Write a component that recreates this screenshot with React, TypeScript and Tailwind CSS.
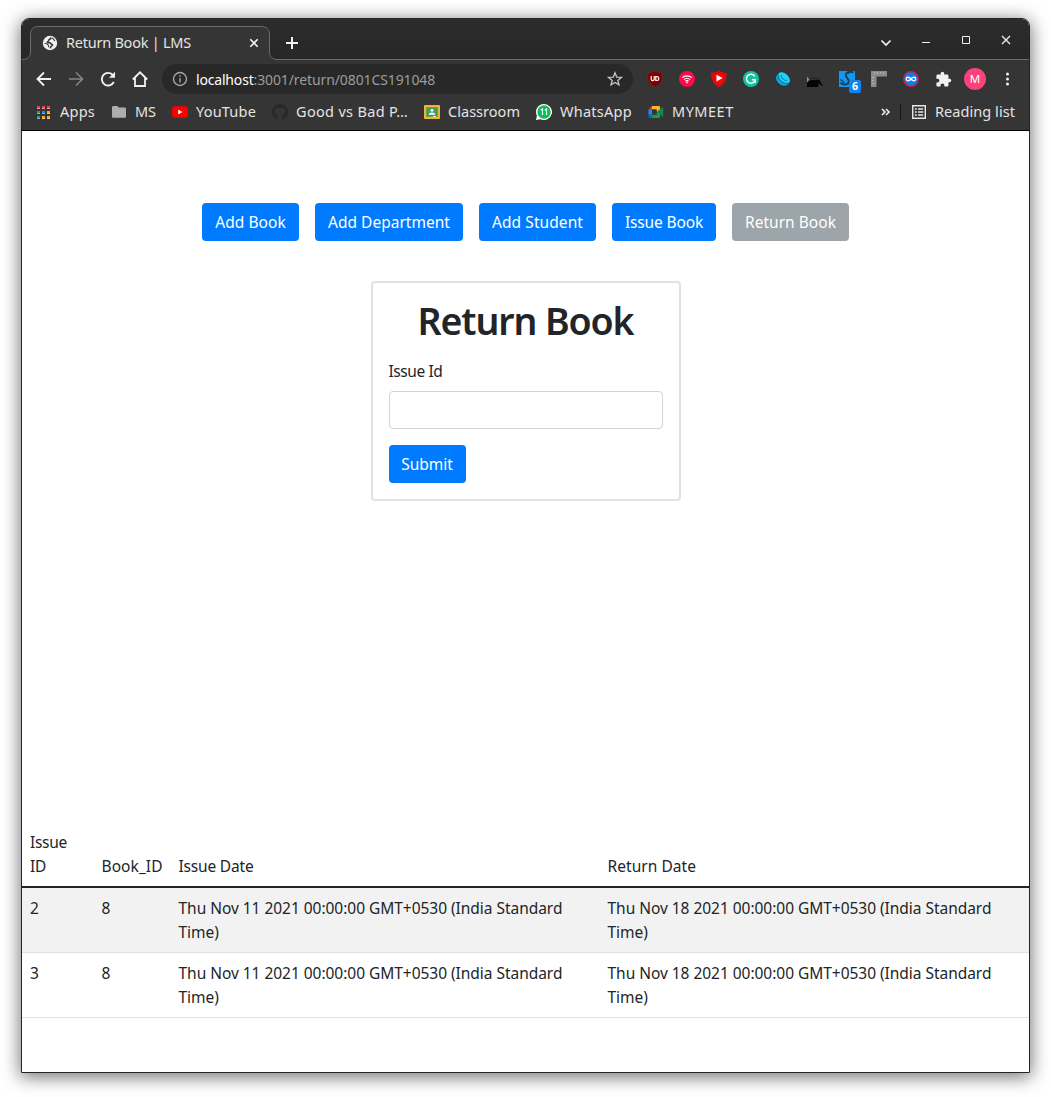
import type { ReactNode } from "react";

function Globe() {
  return (
    <svg width="16" height="16" viewBox="0 0 16 16">
      <circle cx="8" cy="8" r="7.200" fill="#f1f1f1" />
      <path d="M8.300 2.400C9.200 3.200 9 3.900 8 4.100 6.800 4.300 6.700 4.900 6.700 5.700 6.700 6.400 5.400 6.300 5.300 7.100 5.200 7.900 6.600 7.800 7.600 7.800 9 7.800 8.800 9 9.800 9.300 11 9.600 10.400 10.700 9.600 11 8.700 11.300 8.900 12.300 8 13.200" fill="none" stroke="#353535" strokeWidth="1.500" />
      <path d="M2.500 8.300c1.700.2 3.200.6 3.700 1.700.4.900.1 1.600.9 2.100M10 3c1.700.7 2.300 1.800 2.700 3" fill="none" stroke="#353535" strokeWidth="1.100" />
    </svg>
  );
}

function Stroke({ d, size = 16, color = "#f1f1f1", width = 1.8 }: { d: string; size?: number; color?: string; width?: number }) {
  return (
    <svg width={size} height={size} viewBox="0 0 16 16" fill="none" stroke={color} strokeWidth={width}>
      <path d={d} />
    </svg>
  );
}

function Cell({ children }: { children: ReactNode }) {
  return <div className="flex w-8 shrink-0 items-center justify-center">{children}</div>;
}

function TabStrip() {
  return (
    <div className="flex h-[41px] shrink-0 bg-linear-to-b from-[#2c2c2c] to-[#272727]">
      <div className="flex w-[256px] shrink-0">
        <svg width="256" height="41" viewBox="0 0 256 41" className="absolute">
          <path d="M0 41V40.500C5 40.500 8.500 38 8.500 33V15.500C8.500 10.500 11.500 7.500 16.500 7.500H239.500C244.500 7.500 247.500 10.500 247.500 15.500V33C247.500 38 250.500 40.500 256 40.500V41Z" fill="#353535" />
          <path d="M0 40.500C5 40.500 8.500 38 8.500 33V15.500C8.500 10.500 11.500 7.500 16.500 7.500H239.500C244.500 7.500 247.500 10.500 247.500 15.500V33C247.500 38 250.500 40.500 256 40.500" fill="none" stroke="#6d6d6d" />
        </svg>
        <div className="relative flex w-full items-center pt-[7px] pl-5">
          <Globe />
          <span className="ml-2 w-[180px] shrink-0 text-[14.5px] tracking-[-0.24px] text-[#e4e4e4]">Return Book | LMS</span>
          <Stroke d="M4.300 4.300l7.400 7.400M11.700 4.300l-7.400 7.400" width={1.6} />
        </div>
      </div>
      <div className="flex flex-1 items-center border-b border-[#6d6d6d] pt-[7px]">
        <div className="ml-[6px] flex">
          <Stroke d="M8 2v12M2 8h12" width={2} />
        </div>
        <div className="mb-[5px] ml-auto flex items-center">
          <div className="mt-[5px] -mr-px flex w-10 justify-center">
            <Stroke d="M3.500 5.500L8 10l4.500-4.500" width={1.7} />
          </div>
          <div className="ml-px flex w-10 justify-center">
            <Stroke d="M4 10.500h8" width={1} />
          </div>
          <div className="flex w-10 justify-center">
            <Stroke d="M4.500 4.500h7v7h-7z" width={1} />
          </div>
          <div className="mr-[3px] flex w-10 justify-center">
            <Stroke d="M4 4l8 8M12 4l-8 8" width={1.3} />
          </div>
        </div>
      </div>
    </div>
  );
}

function Extensions() {
  return (
    <div className="flex">
      <Cell>
        <svg width="16" height="16" viewBox="0 0 16 16">
          <path d="M8 0c2.500 1.300 4.500 1.700 7 1.800v5.500c0 4-2.500 6.500-7 8.700-4.500-2.200-7-4.700-7-8.700V1.800C3.500 1.700 5.500 1.300 8 0z" fill="#800000" stroke="#a33" strokeWidth=".3" />
          <path d="M4.200 5v3.200c0 1.900 3 1.900 3 0V5M8.800 5v4.500h1.200c2.500 0 2.500-3.800 0-3.800H8.800" fill="none" stroke="#fff" strokeWidth="1.200" />
        </svg>
      </Cell>
      <Cell>
        <svg width="16" height="16" viewBox="0 0 16 16">
          <circle cx="8" cy="8" r="8" fill="#fb0a50" />
          <g fill="none" stroke="#fff" strokeWidth="1.100">
            <path d="M3.200 6.700c2.700-2.500 6.900-2.500 9.600 0M4.900 8.600c1.800-1.600 4.400-1.600 6.200 0M6.400 10.300c1-.8 2.200-.8 3.200 0" />
          </g>
          <circle cx="8" cy="11.600" r=".8" fill="#fff" />
        </svg>
      </Cell>
      <Cell>
        <svg width="16" height="16" viewBox="0 0 16 16">
          <path d="M8 0c2.500 1.300 5 1.800 7.700 1.800C15.900 8.500 13.500 13.500 8 16 2.500 13.500.1 8.500.3 1.800 3 1.800 5.500 1.300 8 0z" fill="#f30c0c" />
          <path d="M8 1.800c2 .9 4 1.300 6 1.400C14 8.300 12 12.300 8 14.300 4 12.300 2 8.300 2 3.200c2-.1 4-.5 6-1.400z" fill="none" stroke="#d80000" />
          <path d="M5.500 3.800v6.600L11.500 7.100z" fill="#fff" />
        </svg>
      </Cell>
      <Cell>
        <svg width="16" height="16" viewBox="0 0 16 16">
          <circle cx="8" cy="8" r="8" fill="#11c39a" />
          <path d="M11.800 5.400A4.500 4.500 0 1 0 12.300 8.800H9M12.300 8.500v3.200" fill="none" stroke="#fff" strokeWidth="1.400" />
        </svg>
      </Cell>
      <Cell>
        <svg width="16" height="16" viewBox="0 0 16 16">
          <g transform="rotate(42 8 8)">
            <ellipse cx="8" cy="8.700" rx="7.200" ry="5.500" fill="#0aa5e0" />
            <ellipse cx="8" cy="6.500" rx="7" ry="4.300" fill="#1cd3f5" />
            <path d="M1.500 7.800c2.500 4 10.500 4 13 0M4 6.300c1.800 2.300 6.200 2.300 8 0" fill="none" stroke="#08618e" strokeWidth=".8" />
          </g>
        </svg>
      </Cell>
      <Cell>
        <svg width="16" height="16" viewBox="0 0 16 16">
          <path d="M2 8l3-2h7l2 3z" fill="#2a2a2a" />
          <path d="M0 11.500L4 9h8.500L16 15l-2.500-1-1.500-2-1 4H0z" fill="#050505" />
          <path d="M0 5.500l2.300 3L0 11.500z" fill="#f47b20" />
        </svg>
      </Cell>
      <Cell>
        <div className="relative h-4 w-4">
          <svg width="16" height="16" viewBox="0 0 16 16">
            <path d="M0 0h16v16H0z" fill="#0a9bfa" />
            <path d="M14.500 1.500C10.500-.2 6.300 1.500 6.800 4.500c.4 2.300 3.500 3.500 3 6.300-.5 3-5 3.800-8.500.9" fill="none" stroke="#263b4a" strokeWidth="2" />
            <path d="M1.500 8.500L5.500 12M11.500 0L8.500 3" fill="none" stroke="#263b4a" strokeWidth="1.200" />
          </svg>
          <span className="absolute top-[9px] left-[10px] flex h-[13px] w-[12px] items-center justify-center rounded-[2px] bg-[#1083ec] text-[10.500px] leading-none font-bold text-white">6</span>
        </div>
      </Cell>
      <Cell>
        <svg width="16" height="16" viewBox="0 0 16 16">
          <path d="M0 0h16v5.500H5.500V16H0z" fill="#8d8d8d" />
          <path d="M3.500 1v1.500M6.500 1v2M9.500 1v1.500M12.500 1v2M1 6.500h2M1 9.500h1.500M1 12.500h2" stroke="#b5b5b5" strokeWidth="1" />
        </svg>
      </Cell>
      <Cell>
        <svg width="16" height="16" viewBox="0 0 16 16">
          <circle cx="8" cy="8" r="7.400" fill="#0b7bef" stroke="#e8132b" strokeWidth="1.200" />
          <path d="M8 8C6.300 5.600 3.200 5.700 3.200 8S6.300 10.400 8 8s4.800-2.300 4.800 0S9.700 10.400 8 8z" fill="none" stroke="#fff" strokeWidth="1.300" />
        </svg>
      </Cell>
      <Cell>
        <svg width="17" height="17" viewBox="0 0 24 24" fill="#f1f1f1">
          <path d="M20.500 11H19V7c0-1.100-.9-2-2-2h-4V3.500a2.500 2.500 0 0 0-5 0V5H4c-1.100 0-2 .9-2 2v3.800h1.500a2.700 2.700 0 0 1 0 5.400H2V20c0 1.100.9 2 2 2h3.800v-1.500a2.700 2.700 0 0 1 5.400 0V22H17c1.100 0 2-.9 2-2v-4h1.500a2.500 2.500 0 0 0 0-5z" />
        </svg>
      </Cell>
      <Cell>
        <div className="flex h-[22px] w-[22px] items-center justify-center rounded-full bg-[#fc427b] text-[11.500px] text-white">M</div>
      </Cell>
      <Cell>
        <svg width="16" height="16" viewBox="0 0 16 16" fill="#f1f1f1">
          <circle cx="8.500" cy="3" r="1.500" />
          <circle cx="8.500" cy="8" r="1.500" />
          <circle cx="8.500" cy="13" r="1.500" />
        </svg>
      </Cell>
    </div>
  );
}

function AddressRow() {
  return (
    <div className="flex h-10 shrink-0 items-center bg-[#353535] pb-[2px] pl-[6px]">
      <Cell>
        <Stroke d="M15 8H2M8 1.500L1.500 8 8 14.500" />
      </Cell>
      <Cell>
        <Stroke d="M1 8h13M8 1.500L14.500 8 8 14.500" color="#858585" width={1.600} />
      </Cell>
      <Cell>
        <svg width="16" height="16" viewBox="0 0 16 16">
          <path d="M13.800 11A6.300 6.300 0 1 1 13 4.200" fill="none" stroke="#f1f1f1" strokeWidth="1.900" />
          <path d="M15 .8v6H9z" fill="#f1f1f1" />
        </svg>
      </Cell>
      <Cell>
        <Stroke d="M.8 8.500L8 1.300l7.200 7.200M3 7v8h10V7" />
      </Cell>
      <div className="ml-[6px] flex h-[30px] w-[471px] items-center rounded-full bg-[#282828] pr-[10px] pl-[10px]">
        <svg width="16" height="16" viewBox="0 0 16 16" fill="none" stroke="#a0a5a8" strokeWidth="1.400">
          <circle cx="8" cy="8" r="6.500" />
          <path d="M8 7v4.500M8 4.200v1.500" />
        </svg>
        <span className="ml-2 text-[14px] tracking-[-0.18px] text-white">localhost</span>
        <span className="text-[14px] tracking-[-0.11px] text-[#9c9c9c]">:3001/return/0801CS191048</span>
        <svg width="16" height="16" viewBox="0 0 16 16" className="ml-auto" fill="none" stroke="#c4c4c4" strokeWidth="1.300">
          <path d="M8 1.800l1.700 4.300 4.700.3-3.600 3 1.200 4.500L8 11.400l-4 2.500 1.200-4.500-3.600-3 4.700-.3z" />
        </svg>
      </div>
      <div className="ml-[6px]">
        <Extensions />
      </div>
    </div>
  );
}

function Apps() {
  const colors = ["#f33f3f", "#f33f3f", "#f33f3f", "#18a765", "#1c8cf0", "#f6a72c", "#18a765", "#f6a72c", "#f6a72c"];
  return (
    <div className="grid w-4 shrink-0 grid-cols-[3px_3px_3px] gap-[2px] pl-[1px]">
      {colors.map((c, i) => (
        <i key={i} className="h-[3px] border-b border-white/40" style={{ background: c }} />
      ))}
    </div>
  );
}

function BookmarkBar() {
  return (
    <div className="flex h-[31px] shrink-0 items-center border-b border-black bg-[#353535] pr-[14px] pb-[6px] pl-[14px] text-[14.500px] whitespace-nowrap text-[#e4e4e4]">
      <Apps />
      <span className="ml-2 w-[51px] tracking-[0.24px]">Apps</span>
      <svg width="16" height="16" viewBox="0 0 16 16" className="shrink-0">
        <path d="M1 3.500C1 2.700 1.500 2 2.300 2h4l1.500 1.500h6c.8 0 1.200.6 1.200 1.300v7.700c0 .8-.5 1.300-1.300 1.300H2.300c-.8 0-1.300-.5-1.300-1.300z" fill="#adadab" />
      </svg>
      <span className="ml-2 w-[37px] tracking-[-0.06px]">MS</span>
      <svg width="16" height="16" viewBox="0 0 16 16" className="shrink-0">
        <rect y="2.300" width="16" height="11.500" rx="3" fill="red" />
        <path d="M6.200 5.800v4.500L10.500 8z" fill="#fff" />
      </svg>
      <span className="ml-2 w-[76px] tracking-[0.2px]">YouTube</span>
      <svg width="16" height="16" viewBox="0 0 16 16" className="shrink-0" fill="#24292e">
        <path d="M8 0C3.580 0 0 3.580 0 8c0 3.540 2.290 6.530 5.470 7.590.4.070.55-.17.55-.38 0-.19-.01-.82-.01-1.490-2.010.37-2.530-.49-2.690-.94-.09-.23-.48-.94-.82-1.130-.28-.15-.68-.52-.01-.53.63-.01 1.080.58 1.230.82.72 1.210 1.870.87 2.330.66.07-.52.28-.87.51-1.070-1.780-.2-3.640-.89-3.640-3.950 0-.87.31-1.590.82-2.150-.08-.2-.36-1.020.08-2.120 0 0 .67-.21 2.200.82a7.600 7.600 0 0 1 4 0c1.530-1.040 2.200-.82 2.200-.82.44 1.100.16 1.920.08 2.120.51.56.82 1.270.82 2.150 0 3.070-1.870 3.750-3.650 3.950.29.25.54.73.54 1.480 0 1.070-.01 1.930-.01 2.200 0 .21.15.46.55.38A8.010 8.010 0 0 0 16 8c0-4.420-3.580-8-8-8z" />
      </svg>
      <span className="ml-2 w-[128px] tracking-[0.32px]">Good vs Bad P…</span>
      <svg width="16" height="16" viewBox="0 0 16 16" className="shrink-0">
        <rect y="1" width="16" height="14" rx="1" fill="#f6b32d" />
        <path d="M2.200 3.200h11.600v9.600H2.200z" fill="#3f9e58" />
        <circle cx="8" cy="6.300" r="1.500" fill="#fff" />
        <path d="M4.700 10.800c0-3 6.600-3 6.600 0z" fill="#fff" />
        <path d="M9 12h3v1H9z" fill="#eee" />
      </svg>
      <span className="ml-2 w-[88px] tracking-[0.03px]">Classroom</span>
      <svg width="16" height="16" viewBox="0 0 16 16" className="shrink-0">
        <path d="M8 0a8 8 0 1 1-3.500 15.200L0 16l.9-4.300A8 8 0 0 1 8 0z" fill="#fff" />
        <circle cx="8" cy="8" r="6.700" fill="#0abf53" />
        <path d="M4.800 6.200L6.500 5v6M8.800 6.200L10.500 5v6" fill="none" stroke="#fff" strokeWidth="1.200" />
      </svg>
      <span className="ml-2 w-[88px] tracking-[0.26px]">WhatsApp</span>
      <svg width="16" height="16" viewBox="0 0 16 16" className="shrink-0">
        <path d="M4 2h7.500v3.300H4z" fill="#fbb32c" />
        <path d="M4 2v3.500H.5z" fill="#ea4335" />
        <path d="M.5 5.500H4v5.300H.500z" fill="#2684fc" />
        <path d="M.5 10.500H4V14H1.700C1 14 .5 13.500.5 12.800z" fill="#0066da" />
        <path d="M4 10.700h4.800V8l3.200-2.500v7.200c0 .7-.5 1.300-1.200 1.300H4z" fill="#12a150" />
        <path d="M10.500 2c.8 0 1.500.5 1.500 1.300V5.500L8.800 8V5.300H8V2z" fill="#fbb32c" />
        <path d="M9 8l5.300-4.600c.4-.3.900-.1.900.4v8.400c0 .5-.5.700-.9.400z" fill="#128a42" />
      </svg>
      <span className="ml-2 tracking-[0.5px]">MYMEET</span>
      <div className="ml-auto flex items-center">
        <Stroke d="M4 5l3 3-3 3M8 5l3 3-3 3" width={1.600} />
        <div className="mr-[10px] ml-[6px] h-4 w-px bg-[#151515]" />
        <svg width="16" height="16" viewBox="0 0 16 16" fill="none" stroke="#e8e8e8">
          <path d="M1.700 1.700h12.600v12.600H1.700z" strokeWidth="1.400" />
          <path d="M3.800 5h2M3.800 8h2M3.800 11h2M7 5h5.200M7 8h5.200M7 11h5.200" strokeWidth="1.500" />
        </svg>
        <span className="ml-2 w-[80px] tracking-[0.06px]">Reading list</span>
      </div>
    </div>
  );
}

const blue = "flex h-[38px] items-center justify-center rounded-[4px] bg-[#007bff] text-white";

function LibraryPage() {
  return (
    <div className="flex flex-1 flex-col bg-white text-[15.500px] leading-6 text-[#212529]">
      <nav className="mt-[72px] flex justify-center gap-4">
        <button className={blue + " w-[97px] tracking-[0.05px]"}>Add Book</button>
        <button className={blue + " w-[148px] tracking-[0.02px]"}>Add Department</button>
        <button className={blue + " w-[117px] tracking-[0.08px]"}>Add Student</button>
        <button className={blue + " w-[104px] tracking-[-0.15px]"}>Issue Book</button>
        <button className="flex h-[38px] w-[117px] items-center justify-center rounded-[4px] bg-[#9da4aa] tracking-[0.03px] text-white">Return Book</button>
      </nav>
      <form className="mt-10 h-[220px] w-[310px] self-center rounded-[4px] border-2 border-[#dee2e6] p-4">
        <h1 className="mb-2 h-[52px] text-center text-[37.500px] leading-[43px] font-semibold tracking-[-1.100px]">Return Book</h1>
        <label className="block h-8 tracking-[-0.410px]">Issue Id</label>
        <input className="block h-[38px] w-full rounded-[4px] border border-[#ced4da]" />
        <button type="button" className={blue + " mt-4 w-[77px]"}>Submit</button>
      </form>
      <table className="mt-80 w-full table-fixed border-collapse text-left">
        <colgroup>
          <col className="w-[71.500px]" />
          <col className="w-[77px]" />
          <col className="w-[429px]" />
          <col />
        </colgroup>
        <thead>
          <tr className="h-[66px] border-b-2 border-[#212529] align-bottom">
            <th className="px-2 pb-2 font-normal tracking-[-0.3px]">Issue<br />ID</th>
            <th className="px-2 pb-2 font-normal tracking-[0.07px]">Book_ID</th>
            <th className="px-2 pb-2 font-normal tracking-[-0.18px]">Issue Date</th>
            <th className="px-2 pb-2 font-normal tracking-[0.05px]">Return Date</th>
          </tr>
        </thead>
        <tbody>
          {["2", "3"].map((id) => (
            <tr key={id} className="h-[65px] border-b border-[#dee2e6] align-top odd:bg-[#f2f2f2]">
              <td className="px-2 pt-2">{id}</td>
              <td className="px-2 pt-2">8</td>
              <td className="px-2 pt-2 tracking-[-0.035px]">Thu Nov 11 2021 00:00:00 GMT+0530 (India Standard<br />Time)</td>
              <td className="px-2 pt-2 tracking-[-0.035px]">Thu Nov 18 2021 00:00:00 GMT+0530 (India Standard<br />Time)</td>
            </tr>
          ))}
        </tbody>
      </table>
    </div>
  );
}

export default function App() {
  return (
    <div className="h-[1097px] w-[1051px] overflow-hidden bg-white pt-[18px] pl-[21px] font-['Noto_Sans',sans-serif]">
      <div className="flex h-[1055px] w-[1009px] flex-col overflow-hidden rounded-t-[8px] border border-[#242424] shadow-[0_3px_18px_1px_rgba(0,0,0,0.55)]">
        <TabStrip />
        <AddressRow />
        <BookmarkBar />
        <LibraryPage />
      </div>
    </div>
  );
}
